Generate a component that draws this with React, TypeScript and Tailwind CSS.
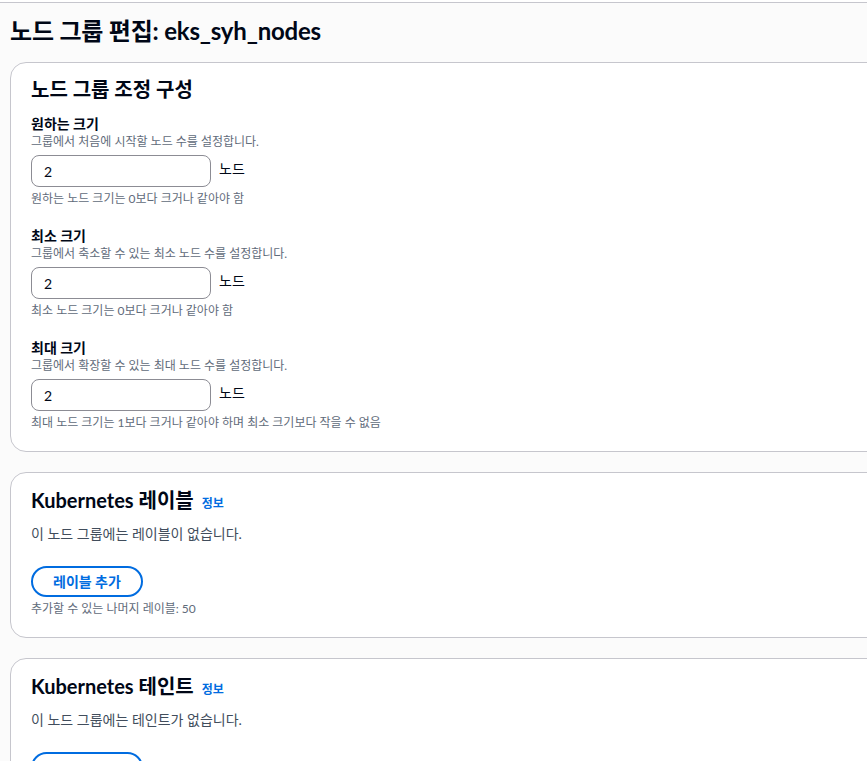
import React from "react";

const font = { fontFamily: 'Lato, "Noto Sans CJK KR", sans-serif' };

function Field({ label, desc, value, constraint }: { label: string; desc: string; value: string; constraint: string }) {
  return (
    <div className="flex flex-col">
      <div className="text-[14px] leading-[20px] font-bold text-[#000716]">{label}</div>
      <div className="text-[12px] leading-[16px] text-[#5f6b7a]">{desc}</div>
      <div className="mt-[5px] flex items-center gap-2">
        <div className="w-[180px] h-[32px] rounded-[8px] border border-[#8c8c94] bg-white px-3 flex items-center text-[14px] text-[#000716]">
          {value}
        </div>
        <span className="text-[14px] leading-[20px] text-[#000716] -mt-[4px]">노드</span>
      </div>
      <div className="mt-[4px] text-[12px] leading-[16px] text-[#5f6b7a]">{constraint}</div>
    </div>
  );
}

function KubeCard({ title, emptyText, button, footer }: { title: string; emptyText: string; button: string; footer?: string }) {
  return (
    <div className="w-[900px] rounded-[16px] border border-[#c6c6cd] bg-white pl-[20px] pt-[13px] pb-[20px]">
      <div className="flex items-baseline gap-[8px]">
        <h2 className="text-[20px] leading-[28px] font-bold text-[#000716]">{title}</h2>
        <span className="text-[12px] leading-[16px] font-bold text-[#006ce0]">정보</span>
      </div>
      <p className="mt-[10px] text-[14px] leading-[20px] text-[#414d5c]">{emptyText}</p>
      <div className="mt-[22px]">
        <button className="h-[31px] px-[20px] rounded-full border-2 border-[#006ce0] text-[14px] font-bold text-[#006ce0] bg-white">
          {button}
        </button>
      </div>
      {footer && <div className="mt-[4px] text-[12px] leading-[16px] text-[#5f6b7a]">{footer}</div>}
    </div>
  );
}

export default function App() {
  return (
    <div className="w-[867px] h-[761px] overflow-hidden bg-white" style={font}>
      <div className="mt-[2px] border-t border-[#c6c6cd] bg-[#fbfbfb] h-[760px] pl-[10px]">
        <h1 className="pt-[13px] text-[24px] leading-[30px] font-bold text-[#000716] tracking-[-0.2px]">노드 그룹 편집: eks_syh_nodes</h1>
        <div className="mt-[16px] flex flex-col gap-[20px]">
          <div className="w-[900px] rounded-[16px] border border-[#c6c6cd] bg-white pl-[20px] pt-[12px] pb-[20px]">
            <h2 className="text-[20px] leading-[28px] font-bold text-[#000716]">노드 그룹 조정 구성</h2>
            <div className="mt-[11px] flex flex-col gap-[19px]">
              <Field
                label="원하는 크기"
                desc="그룹에서 처음에 시작할 노드 수를 설정합니다."
                value="2"
                constraint="원하는 노드 크기는 0보다 크거나 같아야 함"
              />
              <Field
                label="최소 크기"
                desc="그룹에서 축소할 수 있는 최소 노드 수를 설정합니다."
                value="2"
                constraint="최소 노드 크기는 0보다 크거나 같아야 함"
              />
              <Field
                label="최대 크기"
                desc="그룹에서 확장할 수 있는 최대 노드 수를 설정합니다."
                value="2"
                constraint="최대 노드 크기는 1보다 크거나 같아야 하며 최소 크기보다 작을 수 없음"
              />
            </div>
          </div>
          <KubeCard
            title="Kubernetes 레이블"
            emptyText="이 노드 그룹에는 레이블이 없습니다."
            button="레이블 추가"
            footer="추가할 수 있는 나머지 레이블: 50"
          />
          <KubeCard
            title="Kubernetes 테인트"
            emptyText="이 노드 그룹에는 테인트가 없습니다."
            button="테인트 추가"
            footer="추가할 수 있는 나머지 테인트: 50"
          />
        </div>
      </div>
    </div>
  );
}
